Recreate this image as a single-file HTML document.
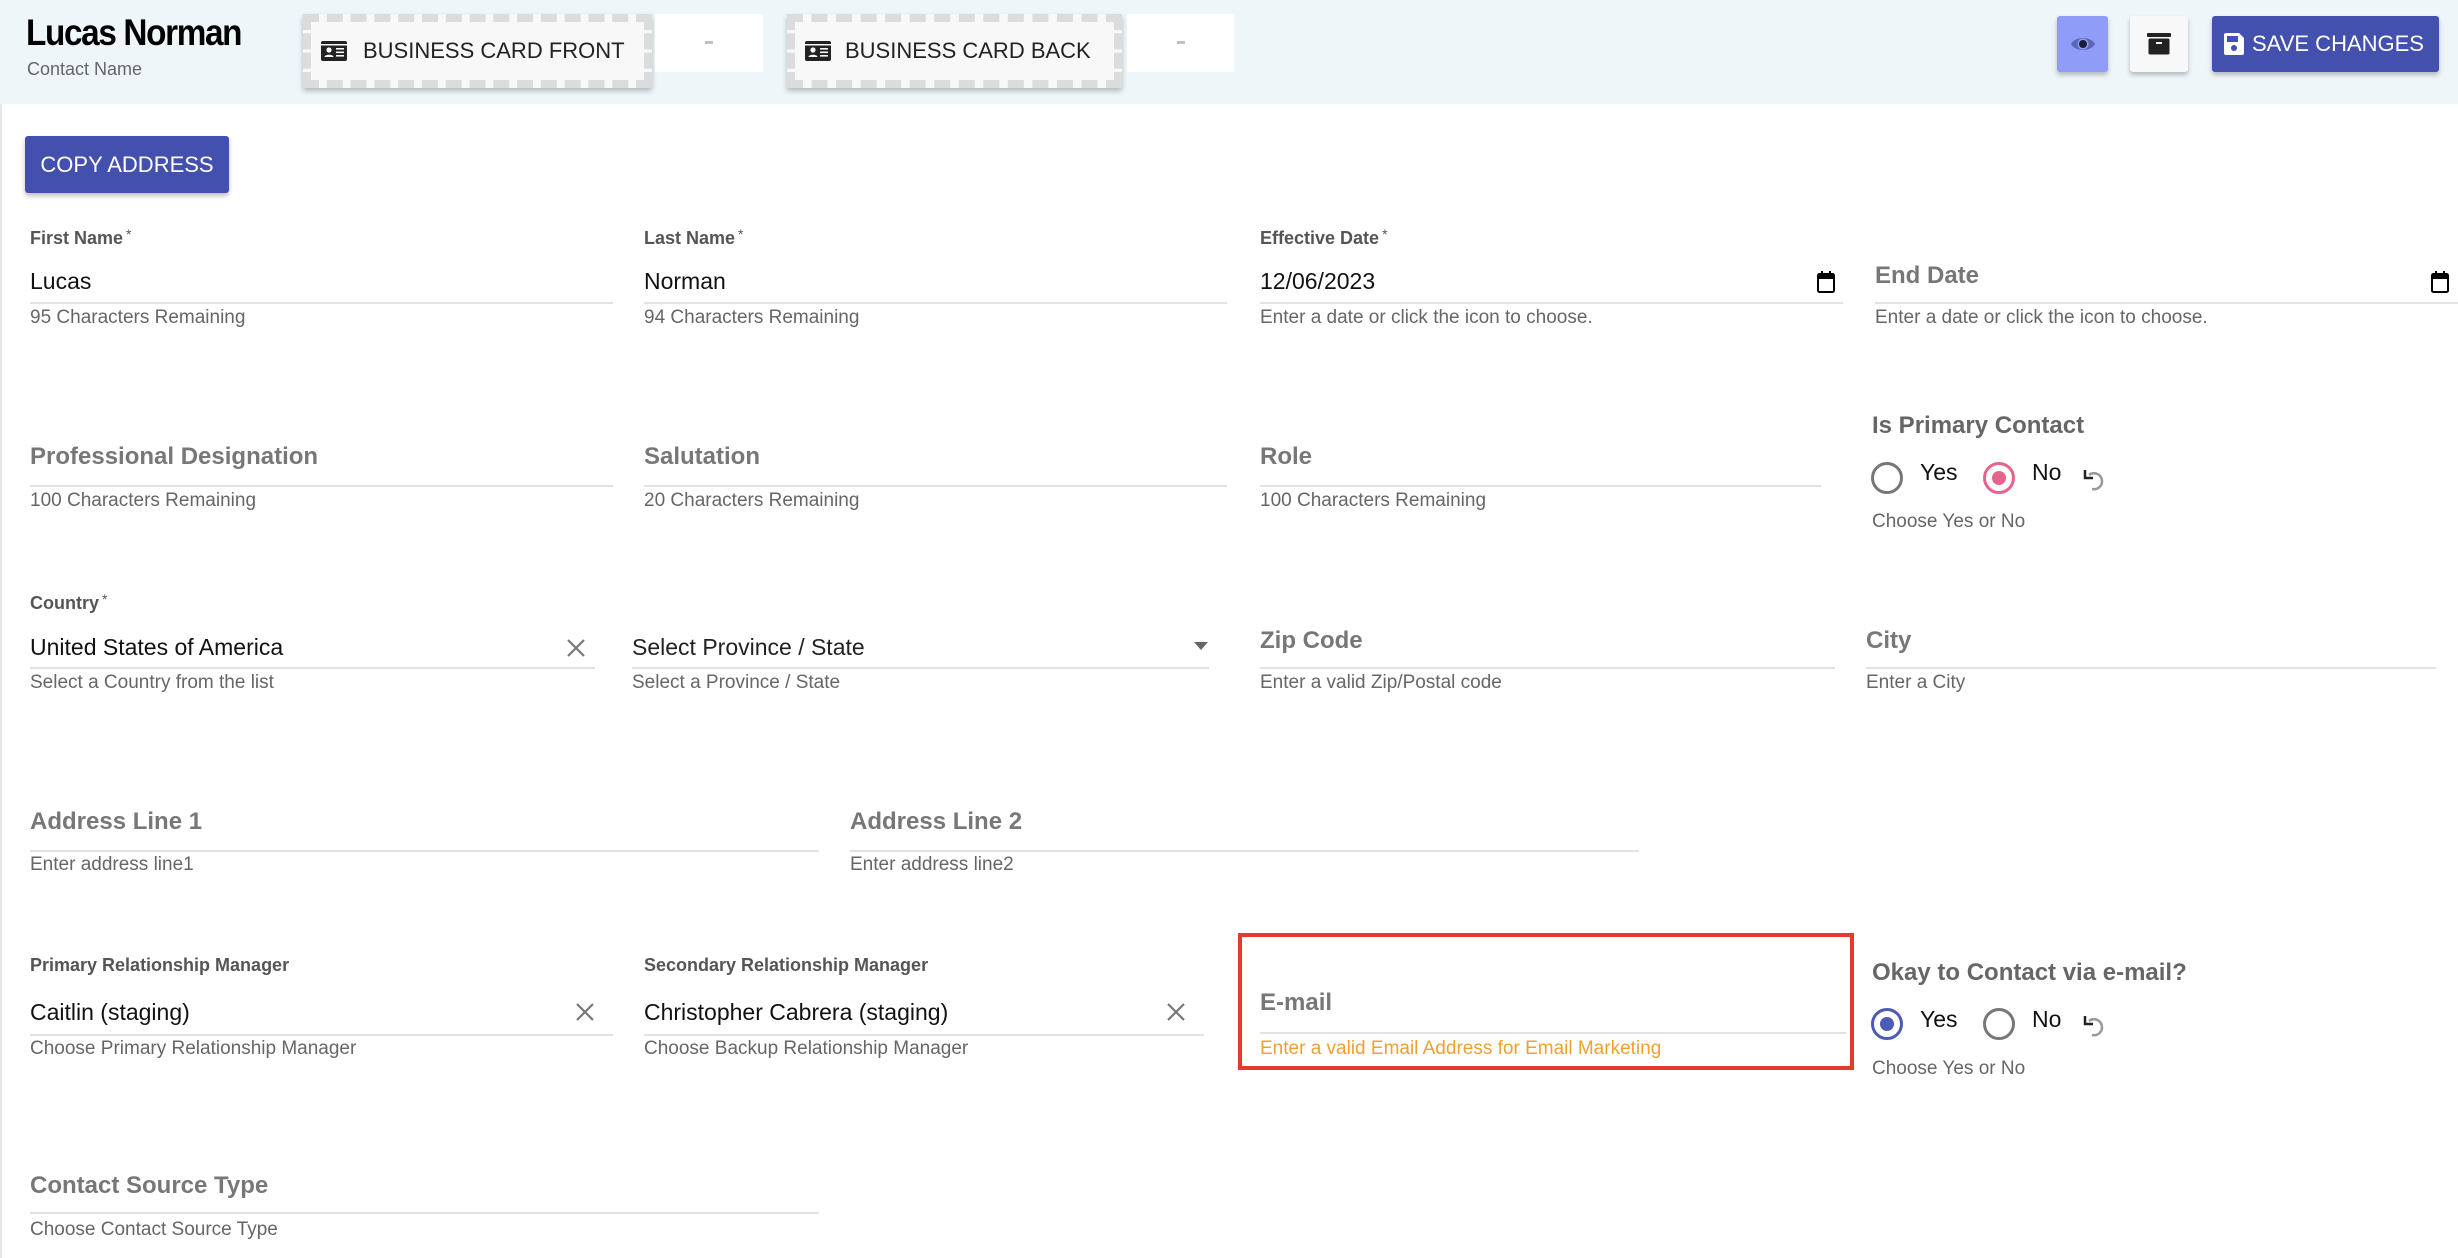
<!DOCTYPE html>
<html><head><meta charset="utf-8"><style>
*{margin:0;padding:0;box-sizing:border-box}
body{width:2458px;height:1258px;position:relative;background:#fff;font-family:"Liberation Sans",Arial,sans-serif;overflow:hidden}
.a{position:absolute;white-space:nowrap;line-height:1;margin-top:2px}
.hdr{position:absolute;left:0;top:0;width:2458px;height:104px;background:#eef6fa}
.lb{font-size:18px;font-weight:bold;color:#555}
.lb sup{font-size:14px;font-weight:normal;vertical-align:5px;margin-left:3px}
.val{font-size:23px;color:#111}
.hl{font-size:19px;color:#666}
.big{font-size:24px;font-weight:bold;color:#777}
.ul{position:absolute;height:2px;background:#e2e2e2}
.bc{position:absolute;background:#f8f8f8;border:8px dashed #dcdcdc;box-shadow:0 3px 5px rgba(0,0,0,.25);font-size:22px;color:#222;display:flex;align-items:center;padding-left:10px}
.wb{position:absolute;background:#fff}
.btn{position:absolute;border-radius:3px;box-shadow:0 3px 5px rgba(0,0,0,.25);display:flex;align-items:center;justify-content:center;color:#fff;font-size:22px}
.radio{position:absolute;width:32px;height:32px;border-radius:50%;border:3px solid #777}
</style></head><body>
<div class="hdr"></div>
<div style="position:absolute;left:0;top:104px;width:2px;height:1154px;background:#e6e6e6"></div>
<div class="a" style="left:26px;top:12px;font-size:37px;font-weight:bold;color:#000;letter-spacing:-1.5px;transform:scaleX(.9);transform-origin:left">Lucas Norman</div>
<div class="a" style="left:27px;top:58px;font-size:18px;color:#666">Contact Name</div>

<div class="bc" style="left:303px;top:14px;width:349px;height:74px">
<svg width="26" height="20" viewBox="0 0 26 20"><rect x="0" y="0" width="26" height="20" rx="2" fill="#222"/><rect x="0" y="3" width="26" height="1.5" fill="#f8f8f8"/><circle cx="8" cy="9" r="2.6" fill="#f8f8f8"/><path d="M3.5 16c0-3 9-3 9 0z" fill="#f8f8f8"/><rect x="15" y="7" width="8" height="1.6" fill="#f8f8f8"/><rect x="15" y="10.5" width="8" height="1.6" fill="#f8f8f8"/><rect x="15" y="14" width="8" height="1.6" fill="#f8f8f8"/></svg>
<span style="margin-left:16px">BUSINESS CARD FRONT</span></div>
<div class="wb" style="left:655px;top:14px;width:108px;height:58px"><div style="position:absolute;left:50px;top:27px;width:8px;height:3px;background:#b8c4d4"></div></div>
<div class="bc" style="left:787px;top:14px;width:335px;height:74px">
<svg width="26" height="20" viewBox="0 0 26 20"><rect x="0" y="0" width="26" height="20" rx="2" fill="#222"/><rect x="0" y="3" width="26" height="1.5" fill="#f8f8f8"/><circle cx="8" cy="9" r="2.6" fill="#f8f8f8"/><path d="M3.5 16c0-3 9-3 9 0z" fill="#f8f8f8"/><rect x="15" y="7" width="8" height="1.6" fill="#f8f8f8"/><rect x="15" y="10.5" width="8" height="1.6" fill="#f8f8f8"/><rect x="15" y="14" width="8" height="1.6" fill="#f8f8f8"/></svg>
<span style="margin-left:14px">BUSINESS CARD BACK</span></div>
<div class="wb" style="left:1127px;top:14px;width:107px;height:58px"><div style="position:absolute;left:50px;top:27px;width:8px;height:3px;background:#b8c4d4"></div></div>

<div class="btn" style="left:2057px;top:16px;width:51px;height:56px;background:#8f9cf8">
<svg width="26" height="20" viewBox="0 0 26 20"><path d="M1 10C5 2 21 2 25 10C21 18 5 18 1 10z" fill="#5a67b8"/><circle cx="13" cy="10" r="5.5" fill="#8f9cf8"/><circle cx="13" cy="10" r="4" fill="#1b1b3a"/></svg></div>
<div class="btn" style="left:2130px;top:16px;width:58px;height:56px;background:#f8f8f8">
<svg width="24" height="22" viewBox="0 0 24 22"><rect x="0" y="0" width="24" height="4" rx="1" fill="#222"/><rect x="1.5" y="5.5" width="21" height="16" rx="1.5" fill="#222"/><rect x="9" y="9" width="6" height="2" fill="#f8f8f8"/></svg></div>
<div class="btn" style="left:2212px;top:16px;width:227px;height:56px;background:#4450ae;justify-content:flex-start;padding-left:12px">
<svg width="20" height="22" viewBox="0 0 20 22"><path d="M2 0h13l5 5v15a2 2 0 0 1-2 2H2a2 2 0 0 1-2-2V2a2 2 0 0 1 2-2z" fill="#fff"/><rect x="3" y="3" width="11" height="6" fill="#4450ae"/><circle cx="10" cy="15" r="3" fill="#4450ae"/></svg>
<span style="margin-left:8px">SAVE CHANGES</span></div>

<div class="btn" style="left:25px;top:136px;width:204px;height:57px;background:#4450ae">COPY ADDRESS</div>

<!-- Row 1 -->
<div class="a lb" style="left:30px;top:225px">First Name<sup>*</sup></div>
<div class="a val" style="left:30px;top:268px">Lucas</div>
<div class="ul" style="left:30px;top:302px;width:583px"></div>
<div class="a hl" style="left:30px;top:306px">95 Characters Remaining</div>

<div class="a lb" style="left:644px;top:225px">Last Name<sup>*</sup></div>
<div class="a val" style="left:644px;top:268px">Norman</div>
<div class="ul" style="left:644px;top:302px;width:583px"></div>
<div class="a hl" style="left:644px;top:306px">94 Characters Remaining</div>

<div class="a lb" style="left:1260px;top:225px">Effective Date<sup>*</sup></div>
<div class="a val" style="left:1260px;top:268px">12/06/2023</div>
<svg class="a" style="left:1817px;top:269px" width="18" height="22" viewBox="0 0 18 22"><rect x="1" y="3" width="16" height="18" rx="1.5" fill="none" stroke="#000" stroke-width="2"/><rect x="1" y="3" width="16" height="5" fill="#000"/><rect x="4" y="0" width="2" height="4" fill="#000"/><rect x="12" y="0" width="2" height="4" fill="#000"/></svg>
<div class="ul" style="left:1260px;top:302px;width:583px"></div>
<div class="a hl" style="left:1260px;top:306px">Enter a date or click the icon to choose.</div>

<div class="a big" style="left:1875px;top:262px">End Date</div>
<svg class="a" style="left:2431px;top:269px" width="18" height="22" viewBox="0 0 18 22"><rect x="1" y="3" width="16" height="18" rx="1.5" fill="none" stroke="#000" stroke-width="2"/><rect x="1" y="3" width="16" height="5" fill="#000"/><rect x="4" y="0" width="2" height="4" fill="#000"/><rect x="12" y="0" width="2" height="4" fill="#000"/></svg>
<div class="ul" style="left:1875px;top:302px;width:583px"></div>
<div class="a hl" style="left:1875px;top:306px">Enter a date or click the icon to choose.</div>

<!-- Row 2 -->
<div class="a big" style="left:30px;top:443px">Professional Designation</div>
<div class="ul" style="left:30px;top:485px;width:583px"></div>
<div class="a hl" style="left:30px;top:489px">100 Characters Remaining</div>
<div class="a big" style="left:644px;top:443px">Salutation</div>
<div class="ul" style="left:644px;top:485px;width:583px"></div>
<div class="a hl" style="left:644px;top:489px">20 Characters Remaining</div>
<div class="a big" style="left:1260px;top:443px">Role</div>
<div class="ul" style="left:1260px;top:485px;width:561px"></div>
<div class="a hl" style="left:1260px;top:489px">100 Characters Remaining</div>

<div class="a big" style="left:1872px;top:412px;color:#666">Is Primary Contact</div>
<div class="radio" style="left:1871px;top:462px"></div>
<div class="a val" style="left:1920px;top:459px">Yes</div>
<div class="radio" style="left:1983px;top:462px;border-color:#e8638c"><div style="position:absolute;left:6px;top:6px;width:14px;height:14px;border-radius:50%;background:#e8638c"></div></div>
<div class="a val" style="left:2032px;top:459px">No</div>
<svg class="a" style="left:2083px;top:466px" width="22" height="24" viewBox="0 0 22 24"><path d="M6 7A8 8 0 1 1 9 21" fill="none" stroke="#999" stroke-width="2.5"/><path d="M2 2v8h8" fill="none" stroke="#222" stroke-width="2.5"/></svg>
<div class="a hl" style="left:1872px;top:510px">Choose Yes or No</div>

<!-- Row 3 -->
<div class="a lb" style="left:30px;top:590px">Country<sup>*</sup></div>
<div class="a val" style="left:30px;top:634px">United States of America</div>
<svg class="a" style="left:566px;top:636px" width="20" height="20" viewBox="0 0 20 20"><path d="M2 2L18 18M18 2L2 18" stroke="#777" stroke-width="2.2"/></svg>
<div class="ul" style="left:30px;top:667px;width:565px"></div>
<div class="a hl" style="left:30px;top:671px">Select a Country from the list</div>

<div class="a val" style="left:632px;top:634px;color:#222">Select Province / State</div>
<svg class="a" style="left:1194px;top:640px" width="14" height="9" viewBox="0 0 14 9"><path d="M0 0h14L7 8z" fill="#666"/></svg>
<div class="ul" style="left:632px;top:667px;width:577px"></div>
<div class="a hl" style="left:632px;top:671px">Select a Province / State</div>

<div class="a big" style="left:1260px;top:627px">Zip Code</div>
<div class="ul" style="left:1260px;top:667px;width:575px"></div>
<div class="a hl" style="left:1260px;top:671px">Enter a valid Zip/Postal code</div>
<div class="a big" style="left:1866px;top:627px">City</div>
<div class="ul" style="left:1866px;top:667px;width:570px"></div>
<div class="a hl" style="left:1866px;top:671px">Enter a City</div>

<!-- Row 4 -->
<div class="a big" style="left:30px;top:808px">Address Line 1</div>
<div class="ul" style="left:30px;top:850px;width:789px"></div>
<div class="a hl" style="left:30px;top:853px">Enter address line1</div>
<div class="a big" style="left:850px;top:808px">Address Line 2</div>
<div class="ul" style="left:850px;top:850px;width:789px"></div>
<div class="a hl" style="left:850px;top:853px">Enter address line2</div>

<!-- Row 5 -->
<div class="a lb" style="left:30px;top:954px">Primary Relationship Manager</div>
<div class="a val" style="left:30px;top:999px">Caitlin (staging)</div>
<svg class="a" style="left:575px;top:1000px" width="20" height="20" viewBox="0 0 20 20"><path d="M2 2L18 18M18 2L2 18" stroke="#777" stroke-width="2.2"/></svg>
<div class="ul" style="left:30px;top:1034px;width:583px"></div>
<div class="a hl" style="left:30px;top:1037px">Choose Primary Relationship Manager</div>

<div class="a lb" style="left:644px;top:954px">Secondary Relationship Manager</div>
<div class="a val" style="left:644px;top:999px">Christopher Cabrera (staging)</div>
<svg class="a" style="left:1166px;top:1000px" width="20" height="20" viewBox="0 0 20 20"><path d="M2 2L18 18M18 2L2 18" stroke="#777" stroke-width="2.2"/></svg>
<div class="ul" style="left:644px;top:1034px;width:560px"></div>
<div class="a hl" style="left:644px;top:1037px">Choose Backup Relationship Manager</div>

<div style="position:absolute;left:1238px;top:933px;width:616px;height:137px;border:4px solid #e53a2e"></div>
<div class="a big" style="left:1260px;top:989px">E-mail</div>
<div class="ul" style="left:1260px;top:1032px;width:586px"></div>
<div class="a hl" style="left:1260px;top:1037px;color:#f0a030">Enter a valid Email Address for Email Marketing</div>

<div class="a big" style="left:1872px;top:959px;color:#666">Okay to Contact via e-mail?</div>
<div class="radio" style="left:1871px;top:1008px;border-color:#4d5bb8"><div style="position:absolute;left:6px;top:6px;width:14px;height:14px;border-radius:50%;background:#4d5bb8"></div></div>
<div class="a val" style="left:1920px;top:1006px">Yes</div>
<div class="radio" style="left:1983px;top:1008px"></div>
<div class="a val" style="left:2032px;top:1006px">No</div>
<svg class="a" style="left:2083px;top:1012px" width="22" height="24" viewBox="0 0 22 24"><path d="M6 7A8 8 0 1 1 9 21" fill="none" stroke="#999" stroke-width="2.5"/><path d="M2 2v8h8" fill="none" stroke="#222" stroke-width="2.5"/></svg>
<div class="a hl" style="left:1872px;top:1057px">Choose Yes or No</div>

<!-- Row 6 -->
<div class="a big" style="left:30px;top:1172px">Contact Source Type</div>
<div class="ul" style="left:30px;top:1212px;width:789px"></div>
<div class="a hl" style="left:30px;top:1218px">Choose Contact Source Type</div>
</body></html>
